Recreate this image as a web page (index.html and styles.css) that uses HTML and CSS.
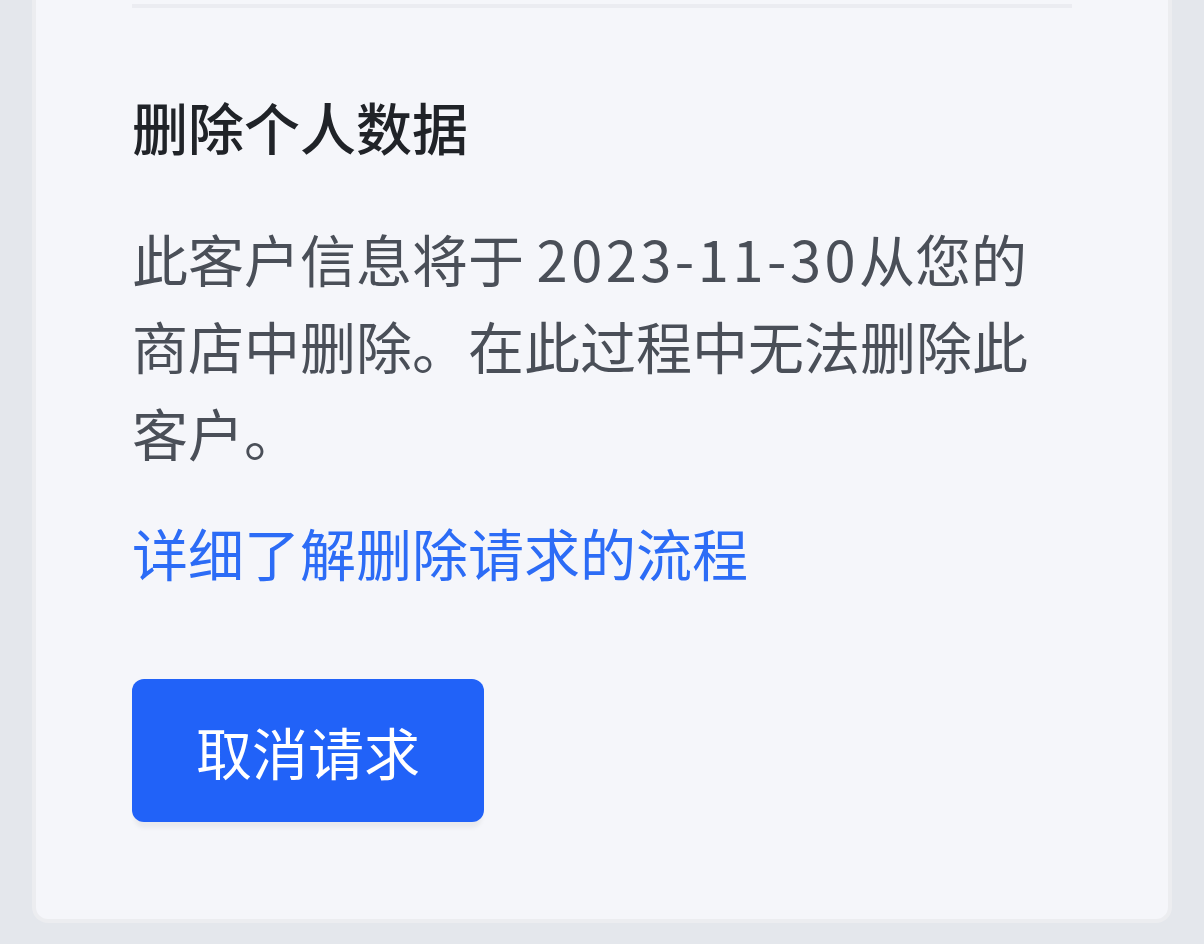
FILE: index.html
```html
<!DOCTYPE html>
<html lang="zh-CN">
<head>
  <meta charset="UTF-8" />
  <meta name="viewport" content="width=device-width, initial-scale=1.0"/>
  <title>删除个人数据</title>
  <link rel="stylesheet" href="styles.css">
</head>
<body>
  <div class="card">
    <div class="divider"></div>

    <h2 class="titulo">删除个人数据</h2>
    <p class="texto">此客户信息将于 <span class="fecha">2023-11-30</span>从您的商店中删除。在此过程中无法删除此客户。</p>
    <a class="enlace" href="#">详细了解删除请求的流程</a>

    <button class="btn">取消请求</button>
  </div>
</body>
</html>
```

FILE: styles.css
```css
body {
  margin: 0;
  background-color: #e4e7ec;
  font-family: "Noto Sans CJK SC", "Noto Sans", sans-serif;
  font-size: 56px;
  line-height: 87px;
}
.card {
  margin: 0 32px;
  padding: 4px 96px 97px;
  background-color: #f5f6fa;
  border: 4px solid #ecedf0;
  border-top: none;
  border-radius: 0 0 16px 16px;
}
.divider {
  height: 4px;
  background: #ebecf1;
}
.titulo {
  margin: 74px 0 0;
  font-size: 56px;
  font-weight: 500;
  color: #202328;
}
.texto {
  margin: 45px 0 0;
  color: #4a4f58;
}
.fecha {
  letter-spacing: 3.5px;
}
.enlace {
  display: block;
  margin-top: 33px;
  color: #2c6cf6;
  text-decoration: none;
}
.btn {
  display: block;
  margin-top: 84px;
  width: 352px;
  height: 143px;
  padding: 0;
  background: #2162f8;
  border: none;
  border-radius: 12px;
  color: #fff;
  font-family: inherit;
  font-size: 56px;
  box-shadow: 0 8px 4px -2px rgba(0, 0, 0, 0.05);
}
```
